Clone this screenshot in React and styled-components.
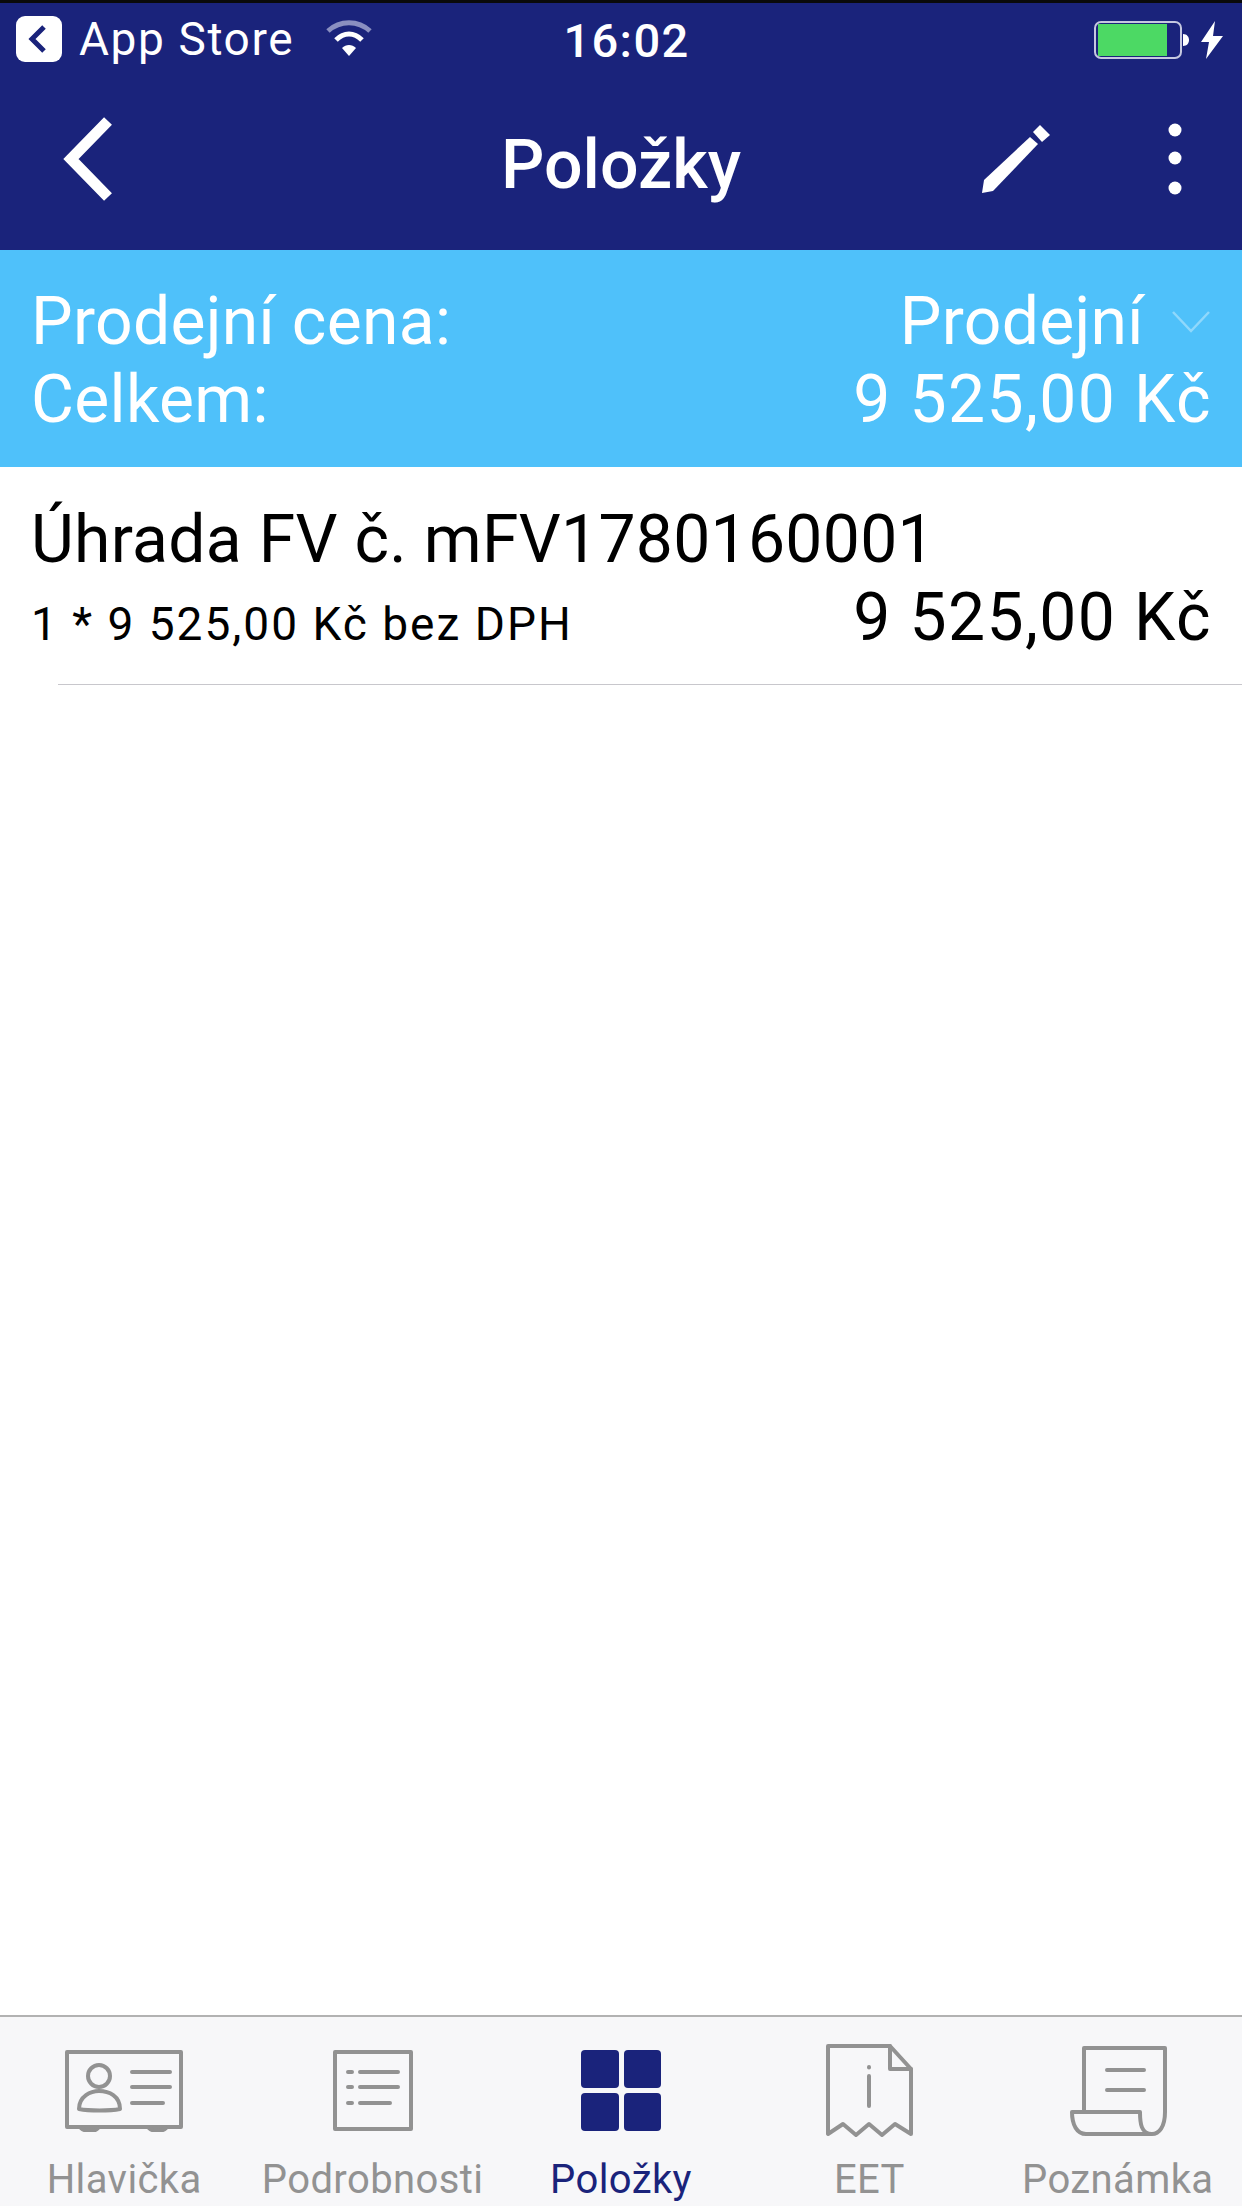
import styled, { createGlobalStyle } from "styled-components";

const NAVY = "#1a237b";
const GRAY = "#929292";

const Global = createGlobalStyle`
  html, body { margin: 0; padding: 0; background: #fff; }
  body { font-family: Roboto, "Liberation Sans", sans-serif; }
`;

const Page = styled.div`
  width: 1242px;
  height: 2206px;
  display: flex;
  flex-direction: column;
  overflow: hidden;
  background: #fff;
`;

const Top = styled.header`
  height: 250px;
  box-sizing: border-box;
  background: ${NAVY};
  border-top: 3px solid #0a0a0a;
  color: #fff;
`;

const StatusBar = styled.div`
  height: 62px;
  padding: 13px 19px 0 16px;
  display: grid;
  grid-template-columns: 1fr auto 1fr;
  align-items: start;
`;

const StatusLeft = styled.div`
  display: flex;
  align-items: center;
  height: 46px;
`;

const BackBadge = styled.svg`
  width: 46px;
  height: 46px;
  margin-right: 17px;
`;

const Carrier = styled.span`
  font-size: 46px;
  line-height: 46px;
  letter-spacing: 1.6px;
`;

const Wifi = styled.svg`
  width: 46px;
  height: 36px;
  margin-left: 32px;
  margin-top: -2px;
`;

const Clock = styled.span`
  font-size: 47px;
  line-height: 46px;
  font-weight: 500;
  letter-spacing: 1.4px;
  margin: 2px 0 0 14px;
`;

const StatusRight = styled.div`
  display: flex;
  justify-content: flex-end;
  align-items: center;
  height: 40px;
  margin-top: 4px;
`;

const Battery = styled.svg`
  width: 96px;
  height: 38px;
`;

const Bolt = styled.svg`
  width: 22px;
  height: 38px;
  margin-left: 11px;
`;

const NavBar = styled.nav`
  height: 140px;
  box-sizing: border-box;
  padding: 22px 60px 0;
  display: flex;
  align-items: center;
  justify-content: space-between;
  position: relative;
`;

const NavTitle = styled.h1`
  position: absolute;
  left: 0;
  right: 0;
  margin: 12px 0 0;
  text-align: center;
  font-size: 68px;
  font-weight: 500;
  line-height: 70px;
`;

const NavActions = styled.div`
  display: flex;
  align-items: center;
  gap: 118px;
`;

const Summary = styled.section`
  height: 217px;
  box-sizing: border-box;
  background: #4fc1fa;
  color: #fff;
  padding: 33px 32px 0 31px;
  font-size: 66px;
  line-height: 78px;
  letter-spacing: 0.3px;
`;

const Line = styled.div`
  display: flex;
  justify-content: space-between;
  align-items: center;
`;

const Picker = styled.span`
  display: flex;
  align-items: center;
  gap: 28px;
`;

const Amount = styled.span`
  letter-spacing: 1.4px;
  margin-right: -2px;
`;

const ItemRow = styled.article`
  height: 218px;
  box-sizing: border-box;
  padding: 34px 32px 0 31px;
  position: relative;
  color: #000;
  &::after {
    content: "";
    position: absolute;
    left: 58px;
    right: 0;
    bottom: 0;
    height: 1px;
    background: #c8c7cc;
  }
`;

const ItemName = styled.div`
  font-size: 66px;
  line-height: 78px;
  letter-spacing: 0.3px;
`;

const ItemMeta = styled.div`
  display: flex;
  justify-content: space-between;
  align-items: baseline;
  font-size: 66px;
  line-height: 78px;
`;

const ItemQty = styled.span`
  font-size: 46px;
  letter-spacing: 2px;
`;

const Spacer = styled.div`
  flex: 1;
`;

const TabBar = styled.footer`
  height: 191px;
  box-sizing: border-box;
  background: #f7f7f9;
  border-top: 2px solid #b2b2b2;
  display: grid;
  grid-template-columns: repeat(5, 1fr);
`;

const Tab = styled.div`
  display: flex;
  flex-direction: column;
  align-items: center;
  color: ${(p) => (p.$active ? NAVY : GRAY)};
`;

const TabIcon = styled.div`
  height: 127px;
  display: flex;
  align-items: center;
  justify-content: center;
  padding-top: 20px;
  box-sizing: border-box;
`;

const TabLabel = styled.span`
  margin-top: 14px;
  font-size: 40px;
  line-height: 44px;
  letter-spacing: 0.4px;
`;

const Outline = styled.svg`
  fill: none;
  stroke: ${GRAY};
  stroke-width: 4;
  stroke-linejoin: round;
  stroke-linecap: round;
`;

function CardIcon() {
  return (
    <Outline width="118" height="82" viewBox="0 0 118 82">
      <path d="M2 2H116V77H2Z" />
      <path d="M16 78C20 82 30 82 33 78M84 78C88 82 97 82 101 78" />
      <circle cx="34" cy="26" r="11" />
      <path d="M14 59C14 46 26 41 34 41C44 41 55 46 55 59C45 61 24 61 14 59Z" />
      <path d="M67 22H105M67 37H105M67 53H98" />
    </Outline>
  );
}

function ListIcon() {
  return (
    <Outline width="80" height="82" viewBox="0 0 80 82">
      <path d="M2 2H78V79H2Z" />
      <path d="M15 22H19M27 22H65M15 37H19M27 37H65M15 53H19M27 53H57" />
    </Outline>
  );
}

function GridIcon() {
  return (
    <svg width="80" height="82" viewBox="0 0 80 82" fill={NAVY}>
      <rect x="0" y="0" width="38" height="38" rx="4" />
      <rect x="43" y="0" width="37" height="38" rx="4" />
      <rect x="0" y="43" width="38" height="38" rx="4" />
      <rect x="43" y="43" width="37" height="38" rx="4" />
    </svg>
  );
}

function ReceiptIcon() {
  return (
    <Outline width="87" height="94" viewBox="0 0 87 94">
      <path d="M2 2H64L85 25V90L69 80L56 91L43 80L30 91L17 80L2 90Z" />
      <path d="M64 2V25H85" />
      <path d="M43 23V23.5M43 32V62" />
    </Outline>
  );
}

function NoteIcon() {
  return (
    <Outline width="98" height="92" viewBox="0 0 98 92">
      <path d="M15 67V3H96V67C96 82 90 89 83 89C72 89 71 78 71 67H3C3 80 8 89 17 89H83" />
      <path d="M38 25H75M38 45H75" />
    </Outline>
  );
}

const tabs = [
  { label: "Hlavička", icon: <CardIcon /> },
  { label: "Podrobnosti", icon: <ListIcon /> },
  { label: "Položky", icon: <GridIcon />, active: true },
  { label: "EET", icon: <ReceiptIcon /> },
  { label: "Poznámka", icon: <NoteIcon /> },
];

export default function App() {
  return (
    <Page>
      <Global />
      <Top>
        <StatusBar>
          <StatusLeft>
            <BackBadge viewBox="0 0 46 46">
              <rect width="46" height="46" rx="9" fill="#fff" />
              <path d="M28 11L16 23L28 35" fill="none" stroke={NAVY} strokeWidth="5" />
            </BackBadge>
            <Carrier>App Store</Carrier>
            <Wifi viewBox="0 0 46 36">
              <path d="M2 11C14 0 32 0 44 11" fill="none" stroke="#8a8fc0" strokeWidth="5" />
              <path d="M10 20C18 12 28 12 36 20" fill="none" stroke="#fff" strokeWidth="5" />
              <path d="M16 28C20 24 26 24 30 28L23 36Z" fill="#fff" />
            </Wifi>
          </StatusLeft>
          <Clock>16:02</Clock>
          <StatusRight>
            <Battery viewBox="0 0 96 38">
              <rect x="1" y="1" width="86" height="36" rx="6" fill="none" stroke="#c5c8e0" strokeWidth="2" />
              <path d="M4 3H73V35H4Z" fill="#4cd964" />
              <path d="M89 13C93 13 95 16 95 19C95 22 93 25 89 25Z" fill="#fff" />
            </Battery>
            <Bolt viewBox="0 0 22 38">
              <path d="M14 0L0 21H8L5 38L22 15H12Z" fill="#fff" />
            </Bolt>
          </StatusRight>
        </StatusBar>
        <NavBar>
          <svg width="52" height="84" viewBox="0 0 52 84" style={{ marginLeft: 2 }}>
            <path d="M46 4L9 42L46 80" fill="none" stroke="#fff" strokeWidth="11" />
          </svg>
          <NavTitle>Položky</NavTitle>
          <NavActions>
            <svg width="68" height="68" viewBox="0 0 68 68" fill="#fff">
              <path d="M0 68L2 55L48 12L56 19L11 66Z" />
              <path d="M58 0L68 10L60 17L51 7Z" />
            </svg>
            <svg width="14" height="72" viewBox="0 0 14 72" fill="#fff">
              <circle cx="7" cy="7" r="6.5" />
              <circle cx="7" cy="35" r="6.5" />
              <circle cx="7" cy="65" r="6.5" />
            </svg>
          </NavActions>
        </NavBar>
      </Top>

      <Summary>
        <Line>
          <span>Prodejní cena:</span>
          <Picker>
            Prodejní
            <svg width="38" height="22" viewBox="0 0 38 22">
              <path d="M1 1L19 20L37 1" fill="none" stroke="#8fd8fc" strokeWidth="2.5" />
            </svg>
          </Picker>
        </Line>
        <Line>
          <span>Celkem:</span>
          <Amount>9 525,00 Kč</Amount>
        </Line>
      </Summary>

      <ItemRow>
        <ItemName>Úhrada FV č. mFV1780160001</ItemName>
        <ItemMeta>
          <ItemQty>1 * 9 525,00 Kč bez DPH</ItemQty>
          <Amount>9 525,00 Kč</Amount>
        </ItemMeta>
      </ItemRow>

      <Spacer />

      <TabBar>
        {tabs.map((t) => (
          <Tab key={t.label} $active={t.active}>
            <TabIcon>{t.icon}</TabIcon>
            <TabLabel>{t.label}</TabLabel>
          </Tab>
        ))}
      </TabBar>
    </Page>
  );
}
